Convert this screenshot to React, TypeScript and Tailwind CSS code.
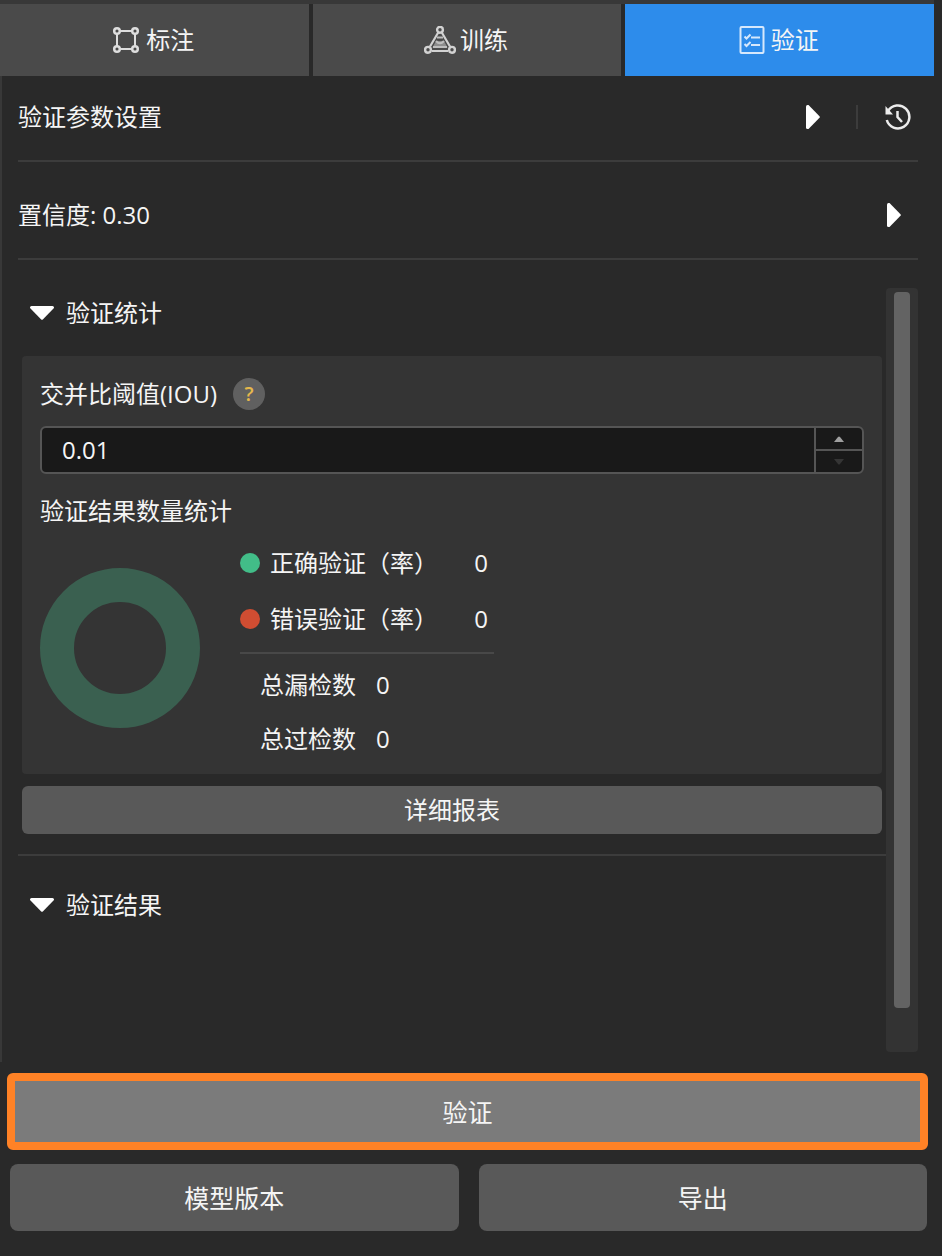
import { useState } from "react";
import type { ReactNode } from "react";

function AnnotateIcon() {
  return (
    <svg viewBox="0 0 28 28" className="size-7" fill="none" stroke="#dedede" strokeWidth="2" aria-hidden="true">
      <path d="M8 5h12M8 23h12M5 8v12M23 8v12" />
      <g strokeWidth="2.500">
        <circle cx="5" cy="5" r="2.800" />
        <circle cx="23" cy="5" r="2.800" />
        <circle cx="5" cy="23" r="2.800" />
        <circle cx="23" cy="23" r="2.800" />
      </g>
    </svg>
  );
}

function TrainIcon() {
  return (
    <svg viewBox="0 0 32 28" className="h-7 w-8" fill="none" stroke="#d2d2d2" strokeWidth="2.200" aria-hidden="true">
      <path d="M14.500 6 6 20.500M17.500 6 26 20.500M8 25h16" />
      <path d="M8.500 21.500h15L20 15h-8z" fill="#8c8c8c" stroke="none" />
      <path d="M13 11.500h6M12 15q4 4.500 8 0M9 21h14" stroke="#bdbdbd" strokeWidth="2" />
      <g strokeWidth="2.400">
        <circle cx="16" cy="3.800" r="2.900" />
        <circle cx="4" cy="23.800" r="2.900" />
        <circle cx="28" cy="23.800" r="2.900" />
      </g>
    </svg>
  );
}

function VerifyIcon() {
  return (
    <svg viewBox="0 0 26 28" className="h-7 w-[26px]" fill="none" stroke="#d6e8fc" strokeWidth="2" aria-hidden="true">
      <rect x="1.500" y="1" width="23" height="26" rx="1" />
      <path d="m5.500 10.500 2 2 4-4M12 11.500h9M5.500 18l2 2 4-4M12 19h9" />
    </svg>
  );
}

function HistoryIcon() {
  return (
    <svg viewBox="0 0 28 28" className="size-7" fill="none" stroke="#ececec" strokeWidth="2.500" aria-hidden="true">
      <path d="M4 8A11.500 11.500 0 1 1 2.800 17" />
      <path d="M1.500 3v8.500h7.500z" fill="#ececec" stroke="none" />
      <path d="M13.500 8v6l4.500 5" />
    </svg>
  );
}

function RightArrow() {
  return (
    <svg viewBox="0 0 14 24" className="h-6 w-3.5" fill="#ffffff" aria-hidden="true">
      <path d="M0 1.500Q0 0 1.500 0h1L13.500 11.200q.700.800 0 1.600L2.500 24h-1Q0 24 0 22.500z" />
    </svg>
  );
}

function DownArrow() {
  return (
    <svg viewBox="0 0 24 14" className="h-3.5 w-6" fill="#ffffff" aria-hidden="true">
      <path d="M1.500 0Q0 0 0 1.500v.500L11.200 13.500q.800.700 1.600 0L24 2v-.500Q24 0 22.500 0z" />
    </svg>
  );
}

const tabs = [
  { name: "标注", icon: <AnnotateIcon />, gap: "gap-1.5" },
  { name: "训练", icon: <TrainIcon />, gap: "gap-1" },
  { name: "验证", icon: <VerifyIcon />, gap: "gap-1.5" },
];

function SectionTitle({ children, open, onToggle }: { children: ReactNode; open: boolean; onToggle: () => void }) {
  return (
    <h2>
      <button type="button" aria-expanded={open} onClick={onToggle} className="flex items-center gap-3 pl-3">
        <span className={open ? "" : "-rotate-90"}>
          <DownArrow />
        </span>
        {children}
      </button>
    </h2>
  );
}

function Threshold() {
  const [value, setValue] = useState("0.01");
  const step = (by: number) =>
    setValue((v) => Math.min(1, Math.max(0.01, (parseFloat(v) || 0) + by)).toFixed(2));
  return (
    <div className="mt-4 flex h-12 overflow-hidden rounded-md border-2 border-[#555555] bg-[#191919]">
      <input
        id="iou"
        inputMode="decimal"
        value={value}
        onChange={(e) => setValue(e.target.value)}
        className="min-w-0 flex-1 bg-transparent px-5 outline-none"
      />
      <div className="flex w-12 flex-col divide-y-2 divide-[#555555] border-l-2 border-[#555555]">
        <button type="button" aria-label="增加" onClick={() => step(0.01)} className="flex flex-1 items-center justify-center">
          <svg viewBox="0 0 10 6" className="h-1.5 w-2.5" fill="#a0a0a0" aria-hidden="true">
            <path d="M0 6 4 1q1-1 2 0l4 5z" />
          </svg>
        </button>
        <button type="button" aria-label="减少" onClick={() => step(-0.01)} className="flex flex-1 items-center justify-center">
          <svg viewBox="0 0 10 6" className="h-1.5 w-2.5" fill="#353535" aria-hidden="true">
            <path d="M0 0 4 5q1 1 2 0l4-5z" />
          </svg>
        </button>
      </div>
    </div>
  );
}

export default function App() {
  const [statsOpen, setStatsOpen] = useState(true);
  const [resultOpen, setResultOpen] = useState(true);

  return (
    <div
      lang="zh-CN"
      className="flex min-h-screen flex-col bg-[#292929] font-['Open_Sans','Noto_Sans_CJK_SC',sans-serif] text-2xl leading-8 text-[#f5f5f5]"
    >
      <nav className="mr-2 grid grid-cols-3 gap-1 border-t-4 border-[#383838]">
        {tabs.map((tab, i) => (
          <button
            key={tab.name}
            type="button"
            className={`flex h-[72px] items-center justify-center pr-0.5 ${tab.gap} ${i === 2 ? "bg-[#2d8ceb]" : "bg-[#4a4a4a]"}`}
          >
            {tab.icon}
            {tab.name}
          </button>
        ))}
      </nav>

      <main className="flex flex-1 flex-col border-l-2 border-[#383838] pr-6 pb-2.5 pl-4">
        <section className="flex h-[86px] items-center border-b-2 border-[#3c3c3c] pb-0.5">
          <h2 className="flex-1">验证参数设置</h2>
          <button type="button" aria-label="展开参数设置">
            <RightArrow />
          </button>
          <span className="mr-[26px] ml-9 h-6 w-0.5 bg-[#3c3c3c]" />
          <button type="button" aria-label="历史记录" className="mr-1.5">
            <HistoryIcon />
          </button>
        </section>

        <section className="flex items-center justify-between border-b-2 border-[#3c3c3c] pt-[37px] pr-[17px] pb-[27px]">
          <p>置信度: 0.30</p>
          <button type="button" aria-label="展开置信度">
            <RightArrow />
          </button>
        </section>

        <div className="mt-7 flex flex-1">
          <div className="min-w-0 flex-1">
            <div className="pt-[9px]">
              <SectionTitle open={statsOpen} onToggle={() => setStatsOpen(!statsOpen)}>
                验证统计
              </SectionTitle>
            </div>

            {statsOpen && (
              <div className="px-1">
                <div className="mt-[27px] rounded bg-[#343434] px-[18px] pt-[22px] pb-[19px]">
                  <div className="flex items-center gap-4">
                    <label htmlFor="iou">交并比阈值(IOU)</label>
                    <button
                      type="button"
                      aria-label="帮助"
                      className="size-8 rounded-full bg-[#606060] text-xl leading-8 font-semibold text-[#e5b84c]"
                    >
                      ?
                    </button>
                  </div>
                  <Threshold />
                  <h3 className="mt-[21px]">验证结果数量统计</h3>

                  <div className="mt-5 flex items-start gap-10">
                    <svg viewBox="0 0 160 160" className="mt-[21px] size-40" role="img" aria-label="验证结果">
                      <circle cx="80" cy="80" r="63" fill="none" stroke="#3a6050" strokeWidth="34" />
                    </svg>
                    <div>
                      <div className="flex w-[254px] flex-col gap-6 border-b-2 border-[#484848] pb-[17px]">
                        <div className="flex items-center">
                          <span className="mr-2.5 size-5 rounded-full bg-[#42bd88]" />
                          <span className="flex-1">正确验证（率）</span>
                          <span className="mr-1.5">0</span>
                        </div>
                        <div className="flex items-center">
                          <span className="mr-2.5 size-5 rounded-full bg-[#d04d32]" />
                          <span className="flex-1">错误验证（率）</span>
                          <span className="mr-1.5">0</span>
                        </div>
                      </div>
                      <div className="mt-[15px] flex flex-col gap-[22px] pl-5">
                        <div className="flex gap-5">
                          <span>总漏检数</span>
                          <span>0</span>
                        </div>
                        <div className="flex gap-5">
                          <span>总过检数</span>
                          <span>0</span>
                        </div>
                      </div>
                    </div>
                  </div>
                </div>
                <button type="button" className="mt-3 h-12 w-full rounded-md bg-[#595959]">
                  详细报表
                </button>
              </div>
            )}

            <div className="mt-5 border-t-2 border-[#3c3c3c] pt-[33px]">
              <SectionTitle open={resultOpen} onToggle={() => setResultOpen(!resultOpen)}>
                验证结果
              </SectionTitle>
            </div>
          </div>

          <div className="flex w-8 flex-col rounded bg-[#333333] px-2 pt-1 pb-11">
            <div className="flex-1 rounded bg-[#636363]" />
          </div>
        </div>
      </main>

      <footer className="grid grid-cols-2 gap-x-5 gap-y-3.5 pt-[11px] pr-[15px] pb-[25px] pl-2.5 text-[25px]">
        <button type="button" className="col-span-2 -mr-px -ml-[3px] h-[77px] rounded-md border-8 border-[#ff8226] bg-[#7b7b7b]">
          验证
        </button>
        <button type="button" className="h-[67px] rounded-lg bg-[#595959]">
          模型版本
        </button>
        <button type="button" className="h-[67px] rounded-lg bg-[#595959]">
          导出
        </button>
      </footer>
    </div>
  );
}
